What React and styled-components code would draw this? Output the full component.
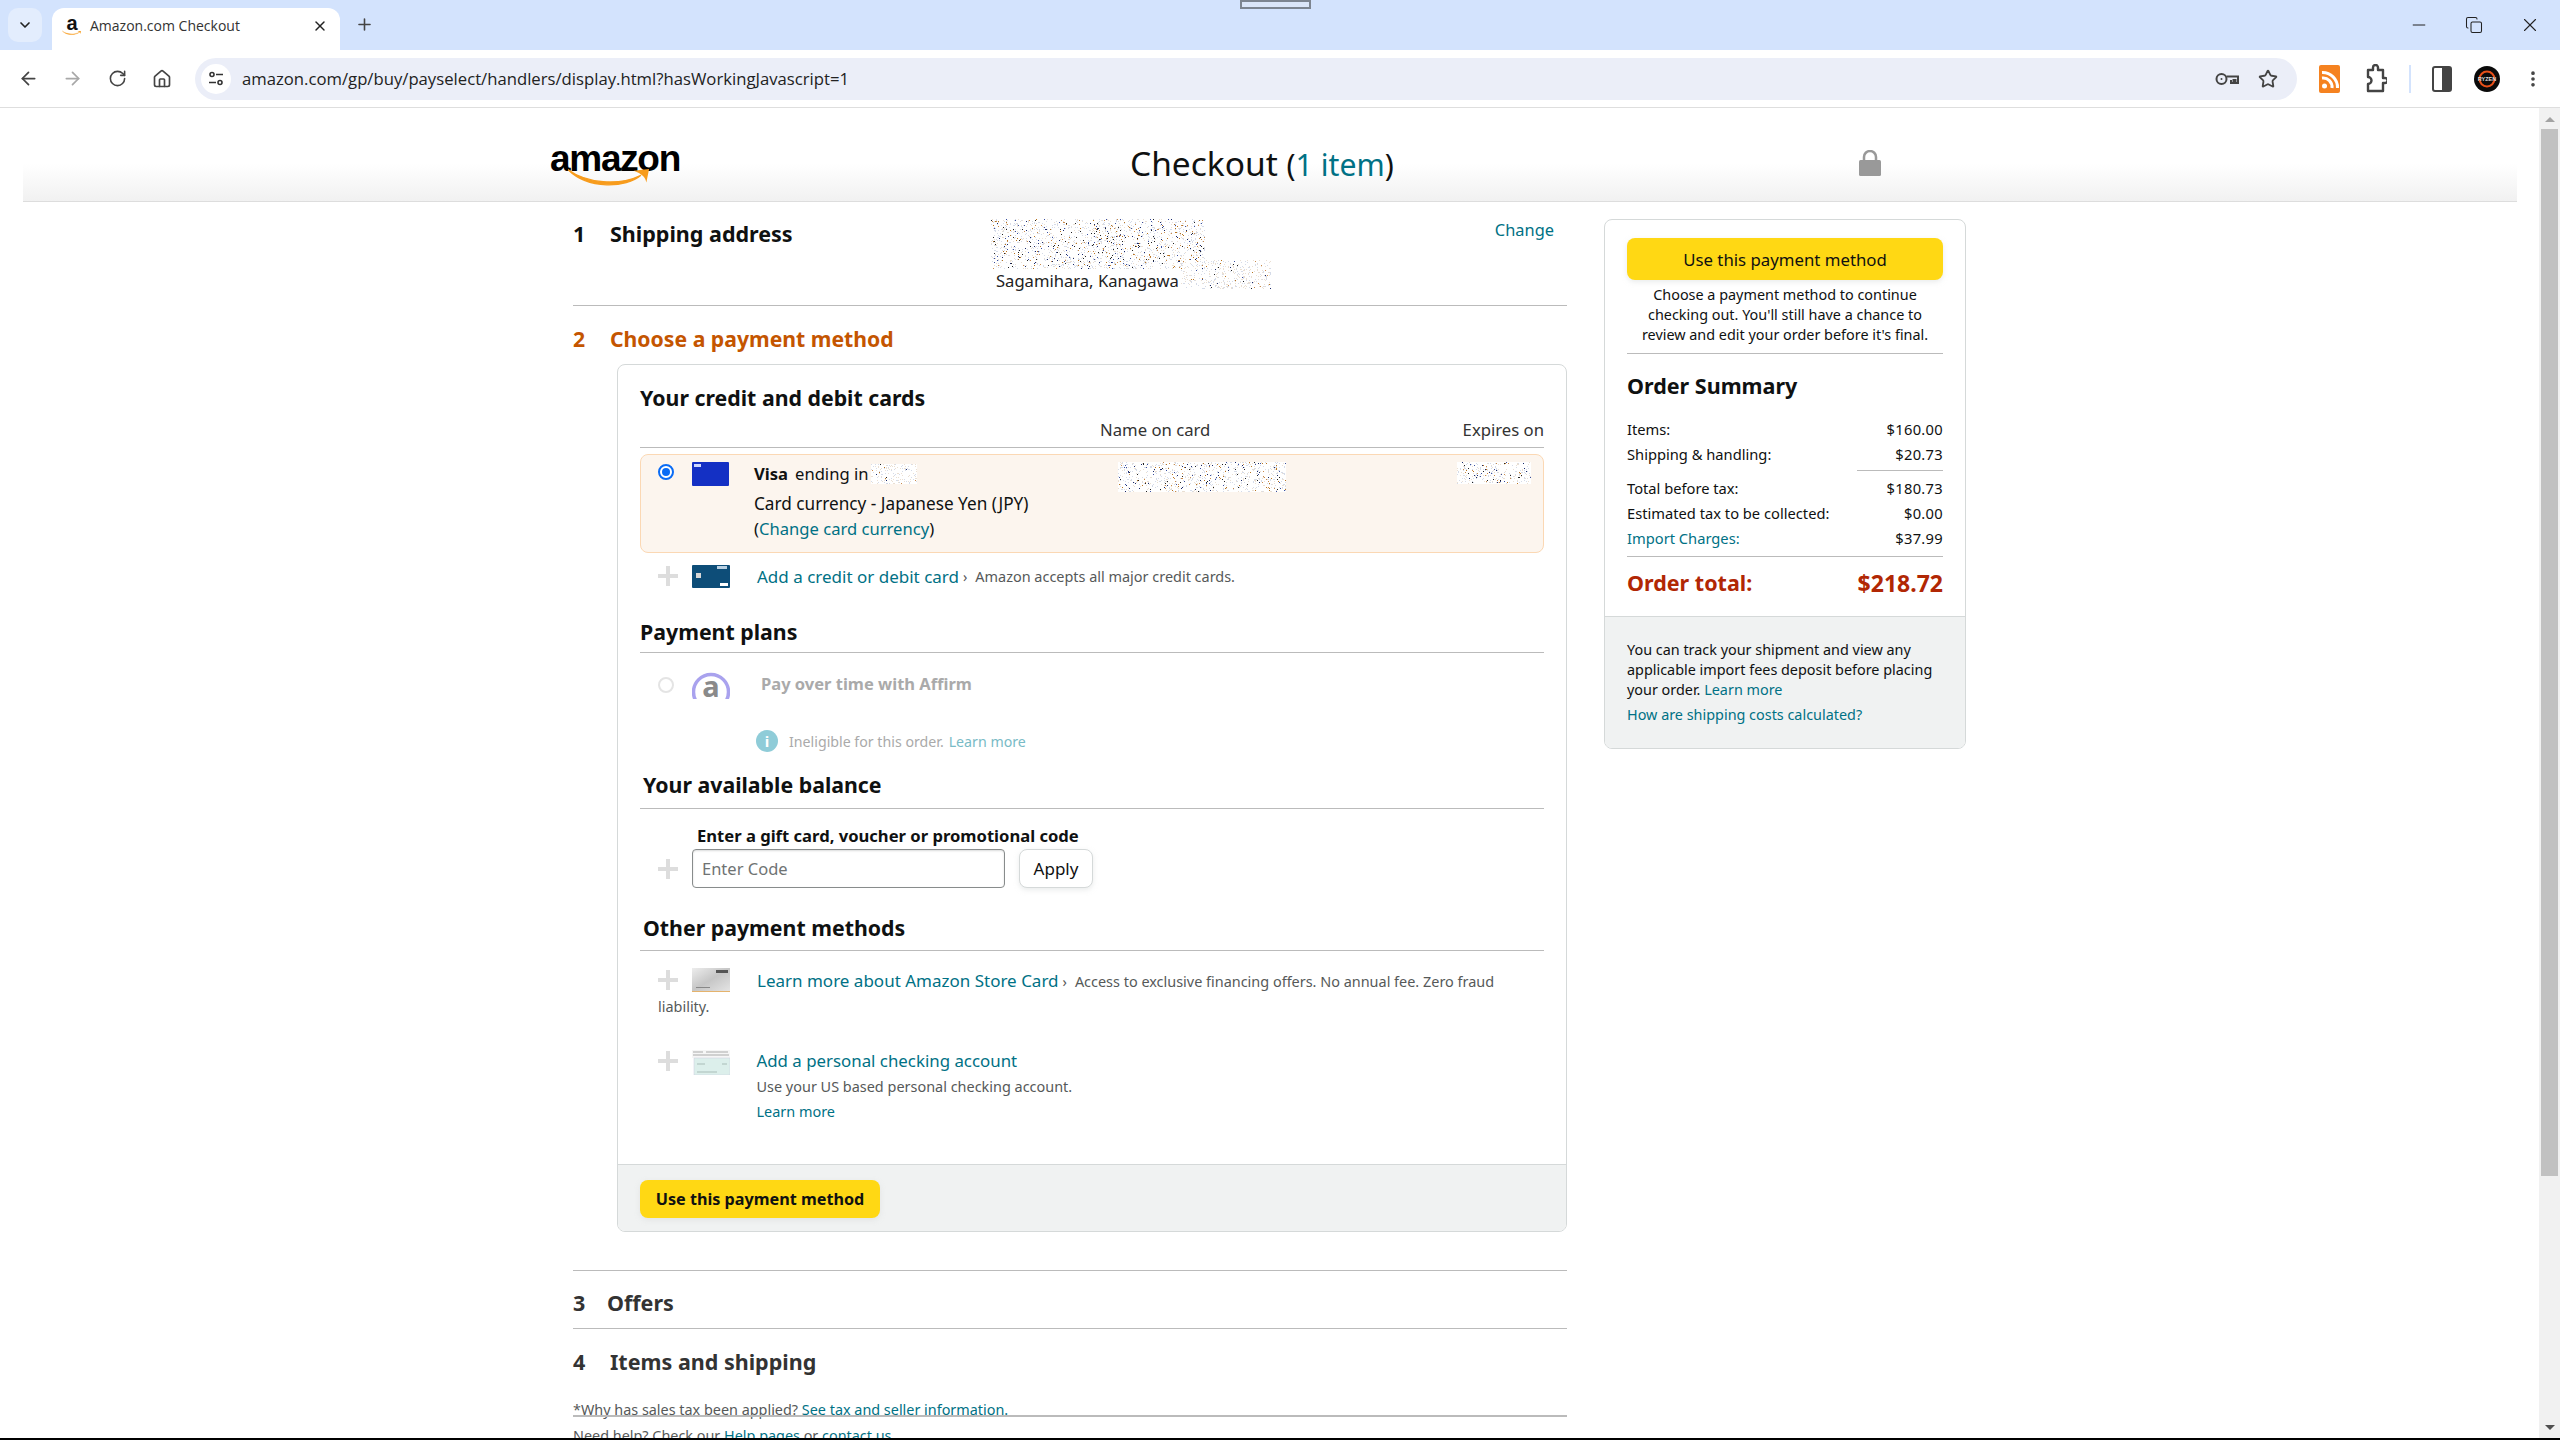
import React, { useMemo } from "react";
import styled, { createGlobalStyle } from "styled-components";
import {
  ArrowLeft,
  ArrowRight,
  RotateCw,
  Home,
  Star,
  Copy,
  Minus,
  X,
  Plus,
  ChevronDown,
  EllipsisVertical,
} from "lucide-react";

const GlobalStyle = createGlobalStyle`
  html, body {
    margin: 0;
    height: 1440px;
    overflow: hidden;
    background: #fff;
    font-family: "Noto Sans", "Open Sans", sans-serif;
    color: #0f1111;
  }
  * { box-sizing: border-box; }
`;

const Screen = styled.div`
  width: 2560px;
  height: 1440px;
  display: flex;
  flex-direction: column;
  position: relative;
`;

/* browser chrome */
const TabStrip = styled.div`
  height: 50px;
  background: #d3e3fd;
  display: flex;
  align-items: flex-end;
  padding-left: 8px;
  position: relative;
`;

const TabSearch = styled.div`
  width: 34px;
  height: 34px;
  margin-bottom: 8px;
  border-radius: 10px;
  background: #e3edfd;
  display: flex;
  align-items: center;
  justify-content: center;
  color: #222;
`;

const Tab = styled.div`
  width: 288px;
  height: 42px;
  margin-left: 10px;
  padding: 0 12px 7px 10px;
  border-radius: 12px 12px 0 0;
  background: #fff;
  display: flex;
  align-items: center;
  font-size: 14px;
  color: #333;
`;

const Favicon = styled.span`
  width: 20px;
  display: inline-flex;
  flex-direction: column;
  align-items: center;
  font: bold 20px/17px "Liberation Sans", sans-serif;
  color: #111;
  margin-right: 8px;
  svg { display: block; margin-top: -2px; }
`;

const TabTitle = styled.span`
  flex: 1;
  font-family: "Open Sans", sans-serif;
`;

const NewTab = styled.div`
  margin: 0 0 16px 15px;
  display: flex;
  color: #444;
`;

const WindowButtons = styled.div`
  margin-left: auto;
  align-self: flex-start;
  display: flex;
  align-items: center;
  gap: 36px;
  padding: 14px 19px 0 0;
  color: #222;
`;

const MirrorHandle = styled.div`
  position: absolute;
  left: 1240px;
  top: 0;
  width: 71px;
  height: 9px;
  border: 2px solid #7d8590;
  background: #dbe6f8;
`;

const Toolbar = styled.div`
  height: 59px;
  background: #fff;
  border-radius: 12px 12px 0 0;
  border-bottom: 1px solid #dedede;
  display: flex;
  align-items: center;
  padding: 1px 0 0 6px;
  margin-top: -1px;
  color: #444;
`;

const NavButton = styled.div`
  width: 44.5px;
  display: flex;
  justify-content: center;
  color: ${(p) => (p.$off ? "#a8a8a8" : "#444")};
`;

const AddressBar = styled.div`
  width: 2102px;
  height: 42px;
  margin-left: 11px;
  border-radius: 21px;
  background: #ebeef8;
  display: flex;
  align-items: center;
  padding: 0 19px 0 6px;
`;

const SiteInfo = styled.div`
  width: 30px;
  height: 30px;
  border-radius: 50%;
  background: #fff;
  display: flex;
  align-items: center;
  justify-content: center;
`;

const Url = styled.div`
  flex: 1;
  margin-left: 11px;
  font: 16.7px "Open Sans", sans-serif;
  color: #222;
`;

const BarIcons = styled.div`
  display: flex;
  align-items: center;
  gap: 19px;
`;

const ToolIcons = styled.div`
  display: flex;
  align-items: center;
  margin-left: 22px;
`;

const ToolButton = styled.div`
  width: 44px;
  margin-left: ${(p) => p.$left}px;
  display: flex;
  justify-content: center;
  color: #444;
`;

const Divider = styled.div`
  width: 2px;
  height: 28px;
  margin: 0 21px 0 11px;
  background: #d3e3fd;
`;

const Avatar = styled.div`
  width: 26px;
  height: 26px;
  margin-left: 22px;
  border-radius: 50%;
  background: #0a0a0a;
  display: flex;
  align-items: center;
  justify-content: center;
`;

/* page area */
const Viewport = styled.div`
  flex: 1;
  display: flex;
  min-height: 0;
`;

const Page = styled.div`
  flex: 1;
  min-width: 0;
  overflow: hidden;
`;

const Scrollbar = styled.div`
  width: 21px;
  background: #f1f1f1;
  display: flex;
  flex-direction: column;
  align-items: center;
  padding-top: 9px;
`;

const ScrollArrow = styled.div`
  width: 0;
  height: 0;
  border-left: 5px solid transparent;
  border-right: 5px solid transparent;
  ${(p) => (p.$down ? "border-top: 5px solid #505050;" : "border-bottom: 5px solid #a3a3a3;")}
`;

const ScrollThumb = styled.div`
  width: 17px;
  height: 1047px;
  margin: 7px 0 auto;
  background: #c1c1c1;
`;

const ScrollSpacer = styled.div`
  height: 8px;
`;

const BottomEdge = styled.div`
  height: 2px;
  background: #000;
`;

const Header = styled.header`
  height: 94px;
  margin: 0 22px 0 23px;
  padding-left: 527px;
  border-bottom: 1px solid #ddd;
  background: linear-gradient(to bottom, #fff 60%, #f1f1f1 100%);
  display: flex;
  align-items: flex-start;
`;

const LogoBox = styled.div`
  width: 132px;
  padding-top: 36px;
  position: relative;
  height: 80px;
`;

const LogoWord = styled.div`
  font: bold 37px/30px "Liberation Sans", sans-serif;
  letter-spacing: -1.3px;
  color: #000;
`;

const LogoSmile = styled.div`
  position: absolute;
  left: 14px;
  top: 60px;
`;

const Title = styled.h1`
  width: 264px;
  margin: 33px 0 0 448px;
  font-size: 33.5px;
  line-height: 44px;
  font-weight: 400;
  white-space: nowrap;
  color: #0f1111;
`;

const ItemCount = styled.span`
  font-size: 30.2px;
`;

const Teal = styled.span`
  color: #007185;
`;

const LockIcon = styled.svg`
  margin: 42px 0 0 465px;
`;

const Columns = styled.div`
  display: flex;
  align-items: flex-start;
  margin-left: 573px;
  gap: 37px;
`;

const LeftColumn = styled.main`
  width: 994px;
`;

const Step = styled.section`
  display: flex;
  align-items: flex-start;
  ${(p) => p.$line && "border-bottom: 1px solid #bbb;"}
`;

const StepHeading = styled.h2`
  margin: 0;
  font-size: 21.5px;
  line-height: 28px;
  font-weight: 700;
  color: ${(p) => p.$color || "#0f1111"};
`;

const StepNumber = styled.span`
  display: inline-block;
  width: ${(p) => p.$w || 37}px;
`;

const ShippingStep = styled(Step)`
  height: 104px;
  padding-top: 18px;
`;

const ShippingHeading = styled(StepHeading)`
  width: 418px;
`;

const AddressBlock = styled.div`
  width: 290px;
`;

const AddressLine = styled.div`
  display: flex;
  align-items: flex-start;
  margin-top: 0;
  padding-left: 5px;
  font-size: 16.6px;
  line-height: 22px;
  color: #222;
`;

const ChangeLink = styled.a`
  margin: -2px 0 0 auto;
  padding-right: 13px;
  font-size: 16.4px;
  line-height: 24px;
  color: #007185;
`;

const PaymentHeading = styled(StepHeading)`
  margin: 19px 0 11px;
  font-size: 21.2px;
`;

const Box = styled.div`
  margin-left: 44px;
  border: 1px solid #d5d9d9;
  border-radius: 8px;
  overflow: hidden;
`;

const BoxBody = styled.div`
  padding: 21px 22px 39px 22px;
`;

const SectionTitle = styled.h3`
  margin: ${(p) => p.$top || 0}px 0 0;
  padding-left: ${(p) => p.$indent || 0}px;
  padding-bottom: ${(p) => p.$pad || 0}px;
  font-size: 21.3px;
  line-height: 24px;
  font-weight: 700;
  ${(p) => p.$line && "border-bottom: 1px solid #bbb;"}
`;

const ColumnHead = styled.div`
  margin-top: 10px;
  height: 28px;
  padding-left: 460px;
  display: flex;
  justify-content: space-between;
  font-size: 16.7px;
  line-height: 20px;
  color: #333;
  border-bottom: 1px solid #bbb;
`;

const SelectedRow = styled.div`
  margin-top: 6px;
  height: 99px;
  border: 1px solid #fbd8b4;
  border-radius: 8px;
  background: #fcf5ee;
  padding: 7px 12px 0 17px;
  display: flex;
  align-items: flex-start;
`;

const Radio = styled.span`
  flex: none;
  width: 16px;
  height: 16px;
  border-radius: 50%;
  border: 2px solid ${(p) => (p.$off ? "#e4e4e4" : "#0a6cf5")};
  background: #fff;
  display: flex;
  align-items: center;
  justify-content: center;
  &::after {
    content: "";
    width: 8px;
    height: 8px;
    border-radius: 50%;
    background: ${(p) => (p.$off ? "transparent" : "#0a6cf5")};
  }
`;

const SelectedRadio = styled(Radio)`
  margin: 2px 18px 0 0;
`;

const CardArt = styled.svg`
  flex: none;
  display: block;
`;

const CardText = styled.div`
  margin: -1px 0 0 25px;
  width: 389px;
  font-size: 16.6px;
  line-height: 25px;
`;

const CardTitleLine = styled.div`
  display: flex;
  align-items: center;
  height: 25px;
  margin-bottom: 5px;
  strong { margin-right: 7px; }
  svg { margin-left: 3px; }
`;

const CurrencyLine = styled.div`
  font-size: 17.2px;
`;

const Link = styled.a`
  color: #007185;
`;

const CardName = styled.div`
  width: 165px;
  margin-left: -25px;
`;

const CardExpiry = styled.div`
  margin: 0 0 0 auto;
`;

const AddRow = styled.div`
  margin-top: 11px;
  padding-left: 18px;
  display: flex;
  align-items: center;
  height: 24px;
`;

const PlusMark = styled.span`
  flex: none;
  width: 34px;
  height: 20px;
  position: relative;
  display: block;
  &::before, &::after {
    content: "";
    position: absolute;
    background: #ddd;
  }
  &::before { left: 0; top: 8px; width: 20px; height: 4px; }
  &::after { left: 8px; top: 0; width: 4px; height: 20px; }
`;

const RowLink = styled.a`
  margin-left: ${(p) => p.$left ?? 27}px;
  font-size: 17px;
  color: #007185;
`;

const RowNote = styled.span`
  margin-left: 8px;
  font-size: 14.45px;
  color: #565959;
`;

const Chevron = styled.span`
  margin-left: 4px;
  font-size: 14px;
  color: #555;
`;

const AffirmRow = styled.div`
  margin-top: 19px;
  padding-left: 18px;
  height: 31px;
  display: flex;
  align-items: flex-start;
`;

const AffirmRadio = styled(Radio)`
  margin: 5px 18px 0 0;
`;

const AffirmMark = styled.div`
  width: 38px;
  height: 27px;
  position: relative;
  text-align: center;
  font: bold 29px/27px "Noto Sans", sans-serif;
  color: #8a8a8a;
  svg { position: absolute; left: 0; top: 0; }
`;

const AffirmLabel = styled.div`
  margin: 0 0 0 31px;
  font-size: 16.5px;
  line-height: 24px;
  font-weight: 700;
  color: #aaa;
`;

const IneligibleRow = styled.div`
  margin: 26px 0 0 116px;
  height: 24px;
  display: flex;
  align-items: center;
  font-size: 14.2px;
  color: #aaa;
`;

const InfoIcon = styled.span`
  width: 22px;
  height: 22px;
  margin-right: 11px;
  border-radius: 50%;
  background: #8fccd8;
  color: #fff;
  display: flex;
  align-items: center;
  justify-content: center;
  font: bold 15px "Noto Sans", sans-serif;
`;

const FadedLink = styled.a`
  margin-left: 5px;
  color: #79bbc6;
`;

const GiftLabel = styled.div`
  margin: 17px 0 0 57px;
  font-size: 16.6px;
  line-height: 20px;
  font-weight: 700;
`;

const GiftRow = styled.div`
  margin-top: 3px;
  padding-left: 18px;
  display: flex;
  align-items: center;
`;

const CodeInput = styled.input`
  width: 313px;
  height: 39px;
  padding: 0 9px;
  border: 1px solid #888c8c;
  border-radius: 4px;
  font: 16.5px "Noto Sans", sans-serif;
  color: #0f1111;
  box-shadow: inset 0 1px 2px rgba(15, 17, 17, 0.15);
  &::placeholder { color: #6f7373; }
`;

const ApplyButton = styled.button`
  width: 74px;
  height: 39px;
  margin-left: 14px;
  padding: 0;
  border: 1px solid #d5d9d9;
  border-radius: 8px;
  background: #fff;
  box-shadow: 0 2px 5px rgba(213, 217, 217, 0.5);
  font: 17px "Noto Sans", sans-serif;
  color: #0f1111;
`;

const StoreBlock = styled.div`
  margin: 17px 0 0 18px;
  font-size: 14.45px;
  line-height: 25px;
  color: #565959;
  min-height: 50px;
`;

const FloatPlus = styled(PlusMark)`
  float: left;
  margin-top: 2px;
`;

const FloatCard = styled(CardArt)`
  float: left;
  margin-right: 27px;
`;

const CheckRow = styled.div`
  margin-top: 29px;
  padding-left: 18px;
  display: flex;
  align-items: flex-start;
`;

const CheckPlus = styled(PlusMark)`
  margin-top: 3px;
`;

const CheckImage = styled(CardArt)`
  margin-top: 2px;
`;

const CheckText = styled.div`
  margin-left: 26.5px;
  font-size: 14.45px;
  line-height: 25.5px;
  color: #565959;
`;

const CheckLink = styled.a`
  display: block;
  font-size: 16.85px;
  color: #007185;
`;

const BoxFooter = styled.div`
  height: 67px;
  background: #f0f2f2;
  border-top: 1px solid #d5d9d9;
  padding: 15px 22px;
`;

const YellowButton = styled.button`
  border: none;
  padding: 0;
  border-radius: 8px;
  background: #ffd814;
  box-shadow: 0 2px 5px rgba(213, 217, 217, 0.5);
  font-family: "Noto Sans", sans-serif;
  color: #0f1111;
`;

const FooterButton = styled(YellowButton)`
  width: 240px;
  height: 38px;
  font-size: 16.2px;
  font-weight: 700;
`;

const OffersStep = styled(Step)`
  margin-top: 38px;
  height: 59px;
  border-top: 1px solid #bbb;
  padding-top: 18px;
`;

const ItemsStep = styled(Step)`
  height: 71px;
  padding-top: 19px;
`;

const Faded = styled(StepHeading)`
  color: #333;
`;

const Footnote = styled.div`
  position: relative;
  font-size: 14.4px;
  line-height: 20px;
  color: #565959;
  height: 26px;
  &::after {
    content: "";
    position: absolute;
    left: 0;
    right: 0;
    top: 15px;
    height: 2px;
    background: #bbb;
  }
`;

const HelpNote = styled.div`
  font-size: 14.4px;
  line-height: 20px;
  color: #565959;
`;

/* order summary */
const Summary = styled.aside`
  width: 362px;
  margin-top: 17px;
  border: 1px solid #d5d9d9;
  border-radius: 8px;
  overflow: hidden;
`;

const SummaryTop = styled.div`
  padding: 18px 22px 0;
  height: 396px;
`;

const SummaryButton = styled(YellowButton)`
  width: 100%;
  height: 42px;
  font-size: 16.8px;
`;

const SummaryNote = styled.p`
  margin: 5px 0 0;
  padding: 0 6px 8px;
  border-bottom: 1px solid #bbb;
  font-size: 14.4px;
  line-height: 20px;
  text-align: center;
`;

const SummaryTitle = styled.h3`
  margin: 18px 0 17px;
  font-size: 21.5px;
  line-height: 28px;
  font-weight: 700;
`;

const PriceRow = styled.div`
  display: flex;
  justify-content: space-between;
  font-size: 14.7px;
  line-height: 25px;
  height: 25px;
`;

const PriceValue = styled.span`
  letter-spacing: 0.3px;
`;

const ShortRule = styled.div`
  width: 86px;
  margin: 3px 0 5px auto;
  border-top: 1px solid #bbb;
`;

const TotalRow = styled.div`
  display: flex;
  justify-content: space-between;
  margin-top: 5px;
  padding-top: 8px;
  border-top: 1px solid #bbb;
  font-size: 21.5px;
  line-height: 36px;
  font-weight: 700;
  color: #b12704;
`;

const TotalValue = styled.span`
  font-size: 23px;
`;

const SummaryFooter = styled.div`
  padding: 23px 22px 0;
  height: 132px;
  background: #f0f2f2;
  border-top: 1px solid #d5d9d9;
  font-size: 14.4px;
  line-height: 20px;
`;

const ShippingCosts = styled.a`
  display: block;
  margin-top: 5px;
  color: #007185;
`;

// scattered dots standing in for the blurred-out personal details
function Noise({ w, h, seed, dark = 0.06 }) {
  const dots = useMemo(() => {
    let s = seed;
    const rnd = () => {
      s = (s * 16807) % 2147483647;
      return s / 2147483647;
    };
    const colors = ["#1a2a6c", "#b8741f", "#222", "#c98a4a", "#3a4fa0"];
    const list = [];
    for (let i = 0; i < (w * h) / 6; i++) {
      const x = Math.floor(rnd() * w);
      const y = Math.floor(rnd() * h);
      const r = rnd();
      const fill = r < dark ? colors[Math.floor(rnd() * colors.length)] : r < 0.55 ? "#eadfd2" : "#d5dbe8";
      list.push(<rect key={i} x={x} y={y} width="1" height="1" fill={fill} />);
    }
    return list;
  }, [w, h, seed, dark]);
  return (
    <svg width={w} height={h} style={{ display: "block", flex: "none" }}>
      <rect width={w} height={h} fill="#fff" />
      {dots}
    </svg>
  );
}

const AddressNoise = styled.div`
  margin-top: -1px;
  margin-bottom: 1px;
`;

const CityNoise = styled.div`
  margin: -10px 0 0 2px;
`;

function SiteInfoIcon() {
  return (
    <svg width="16" height="16" viewBox="0 0 16 16" fill="none" stroke="#333" strokeWidth="1.6">
      <circle cx="4" cy="3.5" r="2" />
      <path d="M8 3.5h7M1 11.5h7" />
      <circle cx="12" cy="11.5" r="2" />
    </svg>
  );
}

function KeyIcon() {
  return (
    <svg width="24" height="16" viewBox="0 0 24 16" fill="none" stroke="#444" strokeWidth="2">
      <circle cx="6.5" cy="8" r="5" />
      <circle cx="6.5" cy="8" r="1" fill="#444" stroke="none" />
      <path d="M11.5 5.5H23V12h-2.5V9h-2v3h-2.5V9" />
    </svg>
  );
}

function ExtensionIcon() {
  return (
    <svg width="22" height="30" viewBox="0 0 22 30" fill="none" stroke="#444" strokeWidth="2.4" strokeLinejoin="round">
      <path d="M3 6h5V3.5a2.5 2.5 0 0 1 5 0V6h5v8h2a2.5 2.5 0 0 1 0 5h-2v8H3v-7a3 3 0 0 0 0-7z" />
    </svg>
  );
}

function RssIcon() {
  return (
    <svg width="21" height="28" viewBox="0 0 21 28">
      <rect width="21" height="28" rx="2" fill="#f58220" />
      <circle cx="5.5" cy="21" r="2.5" fill="#fff" />
      <path d="M3 13a9 9 0 0 1 10 10M3 7.5a15 15 0 0 1 15.5 15.5" fill="none" stroke="#fff" strokeWidth="3" />
    </svg>
  );
}

function PanelIcon() {
  return (
    <svg width="20" height="26" viewBox="0 0 20 26">
      <rect x="1" y="1" width="18" height="24" rx="2" fill="#fff" stroke="#444" strokeWidth="2" />
      <rect x="10" y="1" width="9" height="24" fill="#444" />
    </svg>
  );
}

function RyzenBadge() {
  return (
    <svg width="24" height="24" viewBox="0 0 24 24">
      <circle cx="12" cy="12" r="7.5" fill="none" stroke="#e8501a" strokeWidth="2" />
      <text x="12" y="14" textAnchor="middle" fontSize="5.5" fontWeight="700" fill="#ddd" fontFamily="Liberation Sans">
        RYZEN
      </text>
    </svg>
  );
}

function Smile({ w = 96, h = 22 }) {
  return (
    <svg width={w} height={h} viewBox="0 0 96 22" style={{ display: "block" }}>
      <path d="M2 2C22 17 58 20 82 8C66 22 24 24 2 2Z" fill="#f79c1d" stroke="#f79c1d" strokeWidth="1.5" />
      <path d="M74 3L91 1L88 16C87 10 84 7 74 3Z" fill="#f79c1d" />
    </svg>
  );
}

function BlueCard() {
  return (
    <CardArt width="37" height="24" viewBox="0 0 37 24">
      <rect width="37" height="24" rx="1" fill="#1430c4" />
      <rect x="2" y="2" width="7" height="3" fill="#cfd8ff" />
    </CardArt>
  );
}

function TealCard() {
  return (
    <CardArt width="38" height="23" viewBox="0 0 38 23">
      <rect width="38" height="23" rx="1" fill="#0d4d78" />
      <rect x="4" y="8" width="5" height="5" fill="#d7d7d7" />
      <rect x="25" y="1" width="10" height="3" fill="#b9d0e2" />
      <rect x="28" y="18" width="8" height="3" fill="#fff" />
    </CardArt>
  );
}

function StoreCard() {
  return (
    <FloatCard width="38" height="24" viewBox="0 0 38 24">
      <defs>
        <linearGradient id="silver" x1="0" y1="0" x2="1" y2="1">
          <stop offset="0" stopColor="#ededed" />
          <stop offset="0.5" stopColor="#c6c6c6" />
          <stop offset="1" stopColor="#e4e4e4" />
        </linearGradient>
      </defs>
      <rect width="38" height="23" fill="url(#silver)" />
      <rect y="23" width="38" height="1" fill="#e5b36d" />
      <rect x="24" y="2" width="12" height="3" fill="#555" />
      <rect x="4" y="19" width="14" height="1" fill="#888" />
    </FloatCard>
  );
}

function CheckArt() {
  return (
    <CheckImage width="38" height="25" viewBox="0 0 38 25">
      <rect width="38" height="8" fill="#f6f6f6" />
      <path d="M1 2h10M14 2h22M1 5h36" stroke="#aaa" strokeWidth="1" />
      <rect x="2" y="8" width="36" height="17" fill="#dcefeb" stroke="#ccd" strokeWidth="0.5" />
      <path d="M5 14h8M5 22h20M30 14h5" stroke="#a9bdb8" strokeWidth="1" />
    </CheckImage>
  );
}

function AffirmIcon() {
  return (
    <svg width="38" height="27" viewBox="0 0 38 27">
      <circle cx="19" cy="20" r="17.5" fill="none" stroke="#a9a2ee" strokeWidth="3.5" />
    </svg>
  );
}

export default function App() {
  return (
    <Screen>
      <GlobalStyle />
      <TabStrip>
        <MirrorHandle />
        <TabSearch>
          <ChevronDown size={16} strokeWidth={2.5} />
        </TabSearch>
        <Tab>
          <Favicon>
            a
            <Smile w={20} h={6} />
          </Favicon>
          <TabTitle>Amazon.com Checkout</TabTitle>
          <X size={16} strokeWidth={2.2} color="#222" />
        </Tab>
        <NewTab>
          <Plus size={19} strokeWidth={2} />
        </NewTab>
        <WindowButtons>
          <Minus size={20} strokeWidth={1.2} />
          <Copy size={18} strokeWidth={1.4} />
          <X size={22} strokeWidth={1.2} />
        </WindowButtons>
      </TabStrip>
      <Toolbar>
        <NavButton>
          <ArrowLeft size={21} strokeWidth={2} />
        </NavButton>
        <NavButton $off>
          <ArrowRight size={21} strokeWidth={2} />
        </NavButton>
        <NavButton>
          <RotateCw size={19} strokeWidth={2} />
        </NavButton>
        <NavButton>
          <Home size={20} strokeWidth={2} />
        </NavButton>
        <AddressBar>
          <SiteInfo>
            <SiteInfoIcon />
          </SiteInfo>
          <Url>amazon.com/gp/buy/payselect/handlers/display.html?hasWorkingJavascript=1</Url>
          <BarIcons>
            <KeyIcon />
            <Star size={20} strokeWidth={2.2} />
          </BarIcons>
        </AddressBar>
        <ToolIcons>
          <RssIcon />
          <ToolButton $left={14}>
            <ExtensionIcon />
          </ToolButton>
          <Divider />
          <PanelIcon />
          <Avatar>
            <RyzenBadge />
          </Avatar>
          <ToolButton $left={11}>
            <EllipsisVertical size={20} strokeWidth={2.4} />
          </ToolButton>
        </ToolIcons>
      </Toolbar>
      <Viewport>
        <Page>
          <Header>
            <LogoBox>
              <LogoWord>amazon</LogoWord>
              <LogoSmile>
                <Smile w={92} h={20} />
              </LogoSmile>
            </LogoBox>
            <Title>
              Checkout{" "}
              <ItemCount>
                (<Teal>1 item</Teal>)
              </ItemCount>
            </Title>
            <LockIcon width="22" height="26" viewBox="0 0 22 26">
              <path d="M5 12V7a6 6 0 0 1 12 0v5" fill="none" stroke="#999" strokeWidth="2.5" />
              <rect y="10" width="22" height="16" rx="1.5" fill="#999" />
            </LockIcon>
          </Header>
          <Columns>
            <LeftColumn>
              <ShippingStep $line>
                <ShippingHeading>
                  <StepNumber>1</StepNumber>Shipping address
                </ShippingHeading>
                <AddressBlock>
                  <AddressNoise>
                    <Noise w={214} h={50} seed={11} dark={0.3} />
                  </AddressNoise>
                  <AddressLine>
                    <span>Sagamihara, Kanagawa</span>
                    <CityNoise>
                      <Noise w={90} h={29} seed={23} dark={0.12} />
                    </CityNoise>
                  </AddressLine>
                </AddressBlock>
                <ChangeLink>Change</ChangeLink>
              </ShippingStep>
              <PaymentHeading $color="#c45500">
                <StepNumber>2</StepNumber>Choose a payment method
              </PaymentHeading>
              <Box>
                <BoxBody>
                  <SectionTitle>Your credit and debit cards</SectionTitle>
                  <ColumnHead>
                    <span>Name on card</span>
                    <span>Expires on</span>
                  </ColumnHead>
                  <SelectedRow>
                    <SelectedRadio />
                    <BlueCard />
                    <CardText>
                      <CardTitleLine>
                        <strong>Visa</strong>
                        <span>ending in</span>
                        <Noise w={46} h={20} seed={37} dark={0.1} />
                      </CardTitleLine>
                      <CurrencyLine>Card currency - Japanese Yen (JPY)</CurrencyLine>
                      <div>
                        (<Link>Change card currency</Link>)
                      </div>
                    </CardText>
                    <CardName>
                      <Noise w={168} h={30} seed={41} dark={0.25} />
                    </CardName>
                    <CardExpiry>
                      <Noise w={74} h={22} seed={53} dark={0.25} />
                    </CardExpiry>
                  </SelectedRow>
                  <AddRow>
                    <PlusMark />
                    <TealCard />
                    <RowLink>Add a credit or debit card</RowLink>
                    <Chevron>›</Chevron>
                    <RowNote>Amazon accepts all major credit cards.</RowNote>
                  </AddRow>
                  <SectionTitle $top={32} $pad={8} $line>
                    Payment plans
                  </SectionTitle>
                  <AffirmRow>
                    <AffirmRadio $off />
                    <AffirmMark>
                      <AffirmIcon />a
                    </AffirmMark>
                    <AffirmLabel>Pay over time with Affirm</AffirmLabel>
                  </AffirmRow>
                  <IneligibleRow>
                    <InfoIcon>i</InfoIcon>
                    Ineligible for this order.
                    <FadedLink>Learn more</FadedLink>
                  </IneligibleRow>
                  <SectionTitle $top={20} $pad={11} $indent={3} $line>
                    Your available balance
                  </SectionTitle>
                  <GiftLabel>Enter a gift card, voucher or promotional code</GiftLabel>
                  <GiftRow>
                    <PlusMark />
                    <CodeInput placeholder="Enter Code" />
                    <ApplyButton>Apply</ApplyButton>
                  </GiftRow>
                  <SectionTitle $top={28} $pad={10} $indent={3} $line>
                    Other payment methods
                  </SectionTitle>
                  <StoreBlock>
                    <FloatPlus />
                    <StoreCard />
                    <RowLink $left={0}>Learn more about Amazon Store Card</RowLink>
                    <Chevron>›</Chevron>
                    <RowNote>Access to exclusive financing offers. No annual fee. Zero fraud liability.</RowNote>
                  </StoreBlock>
                  <CheckRow>
                    <CheckPlus />
                    <CheckArt />
                    <CheckText>
                      <CheckLink>Add a personal checking account</CheckLink>
                      <div>Use your US based personal checking account.</div>
                      <Link>Learn more</Link>
                    </CheckText>
                  </CheckRow>
                </BoxBody>
                <BoxFooter>
                  <FooterButton>Use this payment method</FooterButton>
                </BoxFooter>
              </Box>
              <OffersStep $line>
                <Faded>
                  <StepNumber $w={34}>3</StepNumber>Offers
                </Faded>
              </OffersStep>
              <ItemsStep>
                <Faded>
                  <StepNumber $w={37}>4</StepNumber>Items and shipping
                </Faded>
              </ItemsStep>
              <Footnote>
                *Why has sales tax been applied? <Link>See tax and seller information.</Link>
              </Footnote>
              <HelpNote>
                Need help? Check our <Link>Help pages</Link> or <Link>contact us</Link>
              </HelpNote>
            </LeftColumn>
            <Summary>
              <SummaryTop>
                <SummaryButton>Use this payment method</SummaryButton>
                <SummaryNote>
                  Choose a payment method to continue checking out. You'll still have a chance to review and edit your
                  order before it's final.
                </SummaryNote>
                <SummaryTitle>Order Summary</SummaryTitle>
                <PriceRow>
                  <span>Items:</span>
                  <PriceValue>$160.00</PriceValue>
                </PriceRow>
                <PriceRow>
                  <span>Shipping & handling:</span>
                  <PriceValue>$20.73</PriceValue>
                </PriceRow>
                <ShortRule />
                <PriceRow>
                  <span>Total before tax:</span>
                  <PriceValue>$180.73</PriceValue>
                </PriceRow>
                <PriceRow>
                  <span>Estimated tax to be collected:</span>
                  <PriceValue>$0.00</PriceValue>
                </PriceRow>
                <PriceRow>
                  <Link>Import Charges:</Link>
                  <PriceValue>$37.99</PriceValue>
                </PriceRow>
                <TotalRow>
                  <span>Order total:</span>
                  <TotalValue>$218.72</TotalValue>
                </TotalRow>
              </SummaryTop>
              <SummaryFooter>
                You can track your shipment and view any applicable import fees deposit before placing your order.{" "}
                <Link>Learn more</Link>
                <ShippingCosts>How are shipping costs calculated?</ShippingCosts>
              </SummaryFooter>
            </Summary>
          </Columns>
        </Page>
        <Scrollbar>
          <ScrollArrow />
          <ScrollThumb />
          <ScrollArrow $down />
          <ScrollSpacer />
        </Scrollbar>
      </Viewport>
      <BottomEdge />
    </Screen>
  );
}
